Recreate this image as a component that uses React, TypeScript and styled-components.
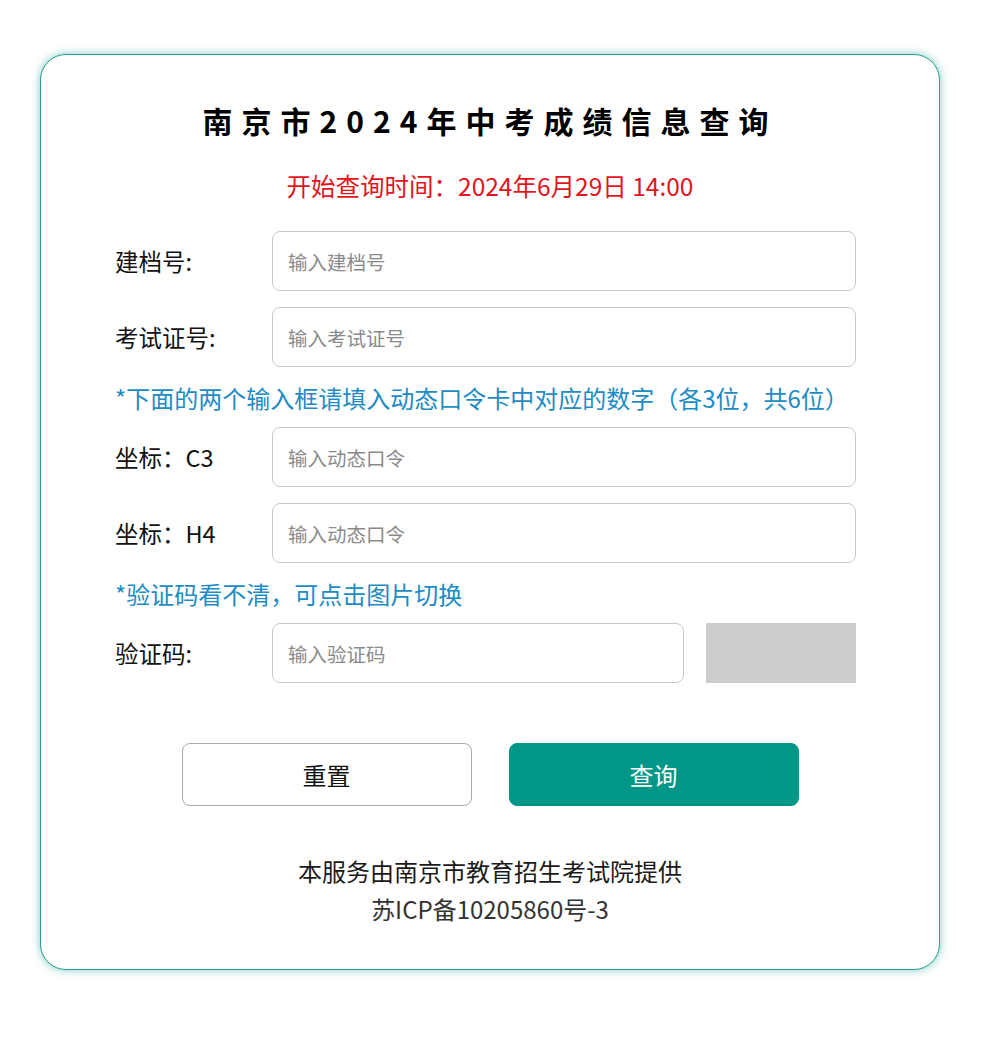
import styled, { createGlobalStyle } from "styled-components";

const GlobalStyle = createGlobalStyle`
  body {
    margin: 0;
    background: #ffffff;
    font-family: "Noto Sans CJK SC", "Noto Sans", sans-serif;
  }
`;

const fields = [
  { label: "建档号:", placeholder: "输入建档号" },
  { label: "考试证号:", placeholder: "输入考试证号" },
];

const codes = [
  { label: "坐标：C3", placeholder: "输入动态口令" },
  { label: "坐标：H4", placeholder: "输入动态口令" },
];

const App = () => {
  return (
    <Page>
      <GlobalStyle />
      <Card>
        <Title>南京市2024年中考成绩信息查询</Title>
        <StartTime>开始查询时间：2024年6月29日 14:00</StartTime>
        <Form>
          {fields.map((f) => (
            <Row key={f.label}>
              <Label>{f.label}</Label>
              <Input placeholder={f.placeholder} />
            </Row>
          ))}
          <Hint>*下面的两个输入框请填入动态口令卡中对应的数字（各3位，共6位）</Hint>
          {codes.map((f) => (
            <Row key={f.label}>
              <Label>{f.label}</Label>
              <Input placeholder={f.placeholder} />
            </Row>
          ))}
          <Hint>*验证码看不清，可点击图片切换</Hint>
          <Row>
            <Label>验证码:</Label>
            <Input placeholder="输入验证码" />
            <Captcha />
          </Row>
        </Form>
        <Buttons>
          <Button type="button">重置</Button>
          <Button type="button" $primary>
            查询
          </Button>
        </Buttons>
        <Footer>
          <div>本服务由南京市教育招生考试院提供</div>
          <FooterSub>苏ICP备10205860号-3</FooterSub>
        </Footer>
      </Card>
    </Page>
  );
};

const Page = styled.main`
  padding: 54px 0 92px;
`;
const Card = styled.section`
  box-sizing: border-box;
  width: 900px;
  margin-left: 40px;
  padding: 47px 0 41px;
  border: 1px solid #2a9d92;
  border-radius: 26px;
  box-shadow: 0 0 8px rgba(0, 150, 136, 0.5);
  background: #ffffff;
  display: flex;
  flex-direction: column;
  align-items: center;
`;
const Title = styled.h1`
  margin: 0;
  font-size: 30px;
  line-height: 36px;
  font-weight: 700;
  letter-spacing: 9px;
  color: #000000;
`;
const StartTime = styled.p`
  margin: 32px 0 0;
  font-size: 24.5px;
  line-height: 32px;
  color: #e3141c;
`;
const Form = styled.div`
  box-sizing: border-box;
  width: 100%;
  padding: 0 83px 0 74px;
  margin-top: 29px;
  display: flex;
  flex-direction: column;
`;
const Row = styled.div`
  display: flex;
  align-items: center;
  height: 60px;
  & + & {
    margin-top: 16px;
  }
`;
const Label = styled.span`
  flex: 0 0 157px;
  font-size: 23.5px;
  color: #111111;
`;
const Input = styled.input`
  flex: 1;
  min-width: 0;
  box-sizing: border-box;
  height: 60px;
  padding: 0 15px;
  border: 1px solid #c9c9c9;
  border-radius: 8px;
  font-family: inherit;
  font-size: 19.5px;
  color: #333333;
  outline: none;
  &::placeholder {
    color: #8a8a8a;
  }
`;
const Captcha = styled.div`
  flex: 0 0 150px;
  height: 60px;
  margin-left: 22px;
  background: #cccccc;
`;
const Hint = styled.p`
  margin: 17px 0 15px;
  font-size: 24px;
  line-height: 28px;
  color: #1d8bc4;
`;
const Buttons = styled.div`
  display: flex;
  gap: 37px;
  margin-top: 60px;
`;
const Button = styled.button<{ $primary?: boolean }>`
  width: 290px;
  height: 63px;
  border-radius: 8px;
  border: 1px solid ${(p) => (p.$primary ? "#009688" : "#aaaaaa")};
  background: ${(p) => (p.$primary ? "#009688" : "#ffffff")};
  color: ${(p) => (p.$primary ? "#ffffff" : "#111111")};
  font-family: inherit;
  font-size: 24px;
  cursor: pointer;
`;
const Footer = styled.footer`
  margin-top: 46px;
  text-align: center;
  font-size: 24px;
  line-height: 38px;
  color: #1a1a1a;
`;
const FooterSub = styled.div`
  color: #333333;
`;

export default App;
